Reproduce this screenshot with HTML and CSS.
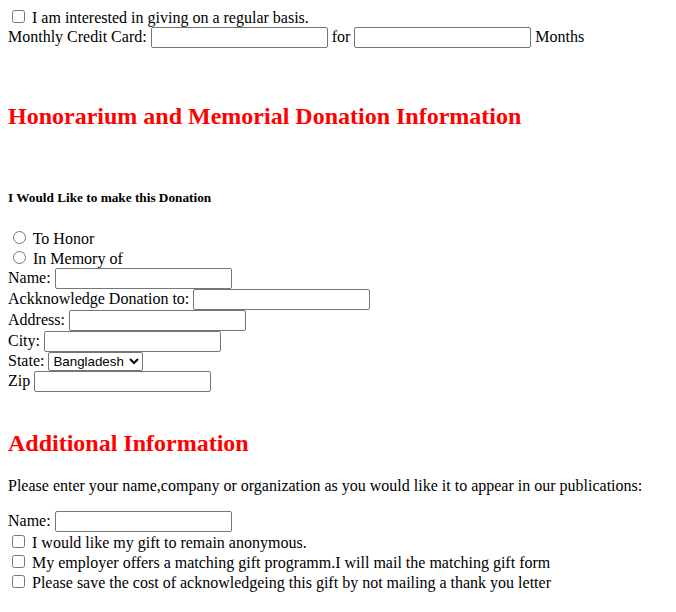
FILE: index.html
```html
<!DOCTYPE html>
<html>
<head>
<meta charset="utf-8">
<link rel="stylesheet" href="styles.css">
</head>
<body>
<form class="form">
  <div class="row"><input type="checkbox" class="check"> I am interested in giving on a regular basis.</div>
  <div class="row">Monthly Credit Card: <input type="text" class="field"> for <input type="text" class="field"> Months</div>

  <h2 class="section-title title-honor">Honorarium and Memorial Donation Information</h2>

  <h5 class="sub-title">I Would Like to make this Donation</h5>

  <div class="row"><input type="radio" name="kind" class="radio"> To Honor</div>
  <div class="row"><input type="radio" name="kind" class="radio"> In Memory of</div>
  <div class="row">Name: <input type="text" class="field"></div>
  <div class="row">Ackknowledge Donation to: <input type="text" class="field"></div>
  <div class="row">Address: <input type="text" class="field"></div>
  <div class="row">City: <input type="text" class="field"></div>
  <div class="row">State: <select class="select"><option>Bangladesh</option></select></div>
  <div class="row">Zip <input type="text" class="field"></div>

  <h2 class="section-title title-additional">Additional Information</h2>

  <p class="para">Please enter your name,company or organization as you would like it to appear in our publications:</p>

  <div class="row">Name: <input type="text" class="field"></div>
  <div class="row"><input type="checkbox" class="check"> I would like my gift to remain anonymous.</div>
  <div class="row"><input type="checkbox" class="check"> My employer offers a matching gift programm.I will mail the matching gift form</div>
  <div class="row"><input type="checkbox" class="check"> Please save the cost of acknowledgeing this gift by not mailing a thank you letter</div>
</form>
</body>
</html>
```

FILE: styles.css
```css
html, body {
  background: #ffffff;
}
body {
  margin: 7px 8px 8px;
  font-family: "Liberation Serif", "Times New Roman", serif;
  font-size: 16px;
  color: #000000;
}
.form {
  margin: 0;
}
.row {
  margin: 0;
}
.field {
  box-sizing: border-box;
  width: 177px;
  height: 21px;
  padding: 1px 2px;
  border: 1px solid #767676;
  border-radius: 2px;
  font-family: "Liberation Sans", Arial, sans-serif;
  font-size: 13.333px;
  vertical-align: baseline;
}
.select {
  box-sizing: border-box;
  width: 95px;
  height: 19px;
  font-family: "Liberation Sans", Arial, sans-serif;
  font-size: 13.333px;
  border: 1px solid #767676;
  border-radius: 2px;
  background: #ffffff;
  color: #000000;
}
.check {
  margin: 3px 3px 3px 4px;
}
.radio {
  margin: 3px 3px 0 5px;
}
.section-title {
  color: #ff0000;
  font-size: 24px;
  font-weight: bold;
  margin: 0;
}
.title-honor {
  margin-top: 55px;
}
.title-additional {
  margin-top: 38px;
}
.sub-title {
  font-size: 13.28px;
  font-weight: bold;
  margin: 60px 0 22px;
}
.para {
  margin: 20px 0 16px;
}
```
